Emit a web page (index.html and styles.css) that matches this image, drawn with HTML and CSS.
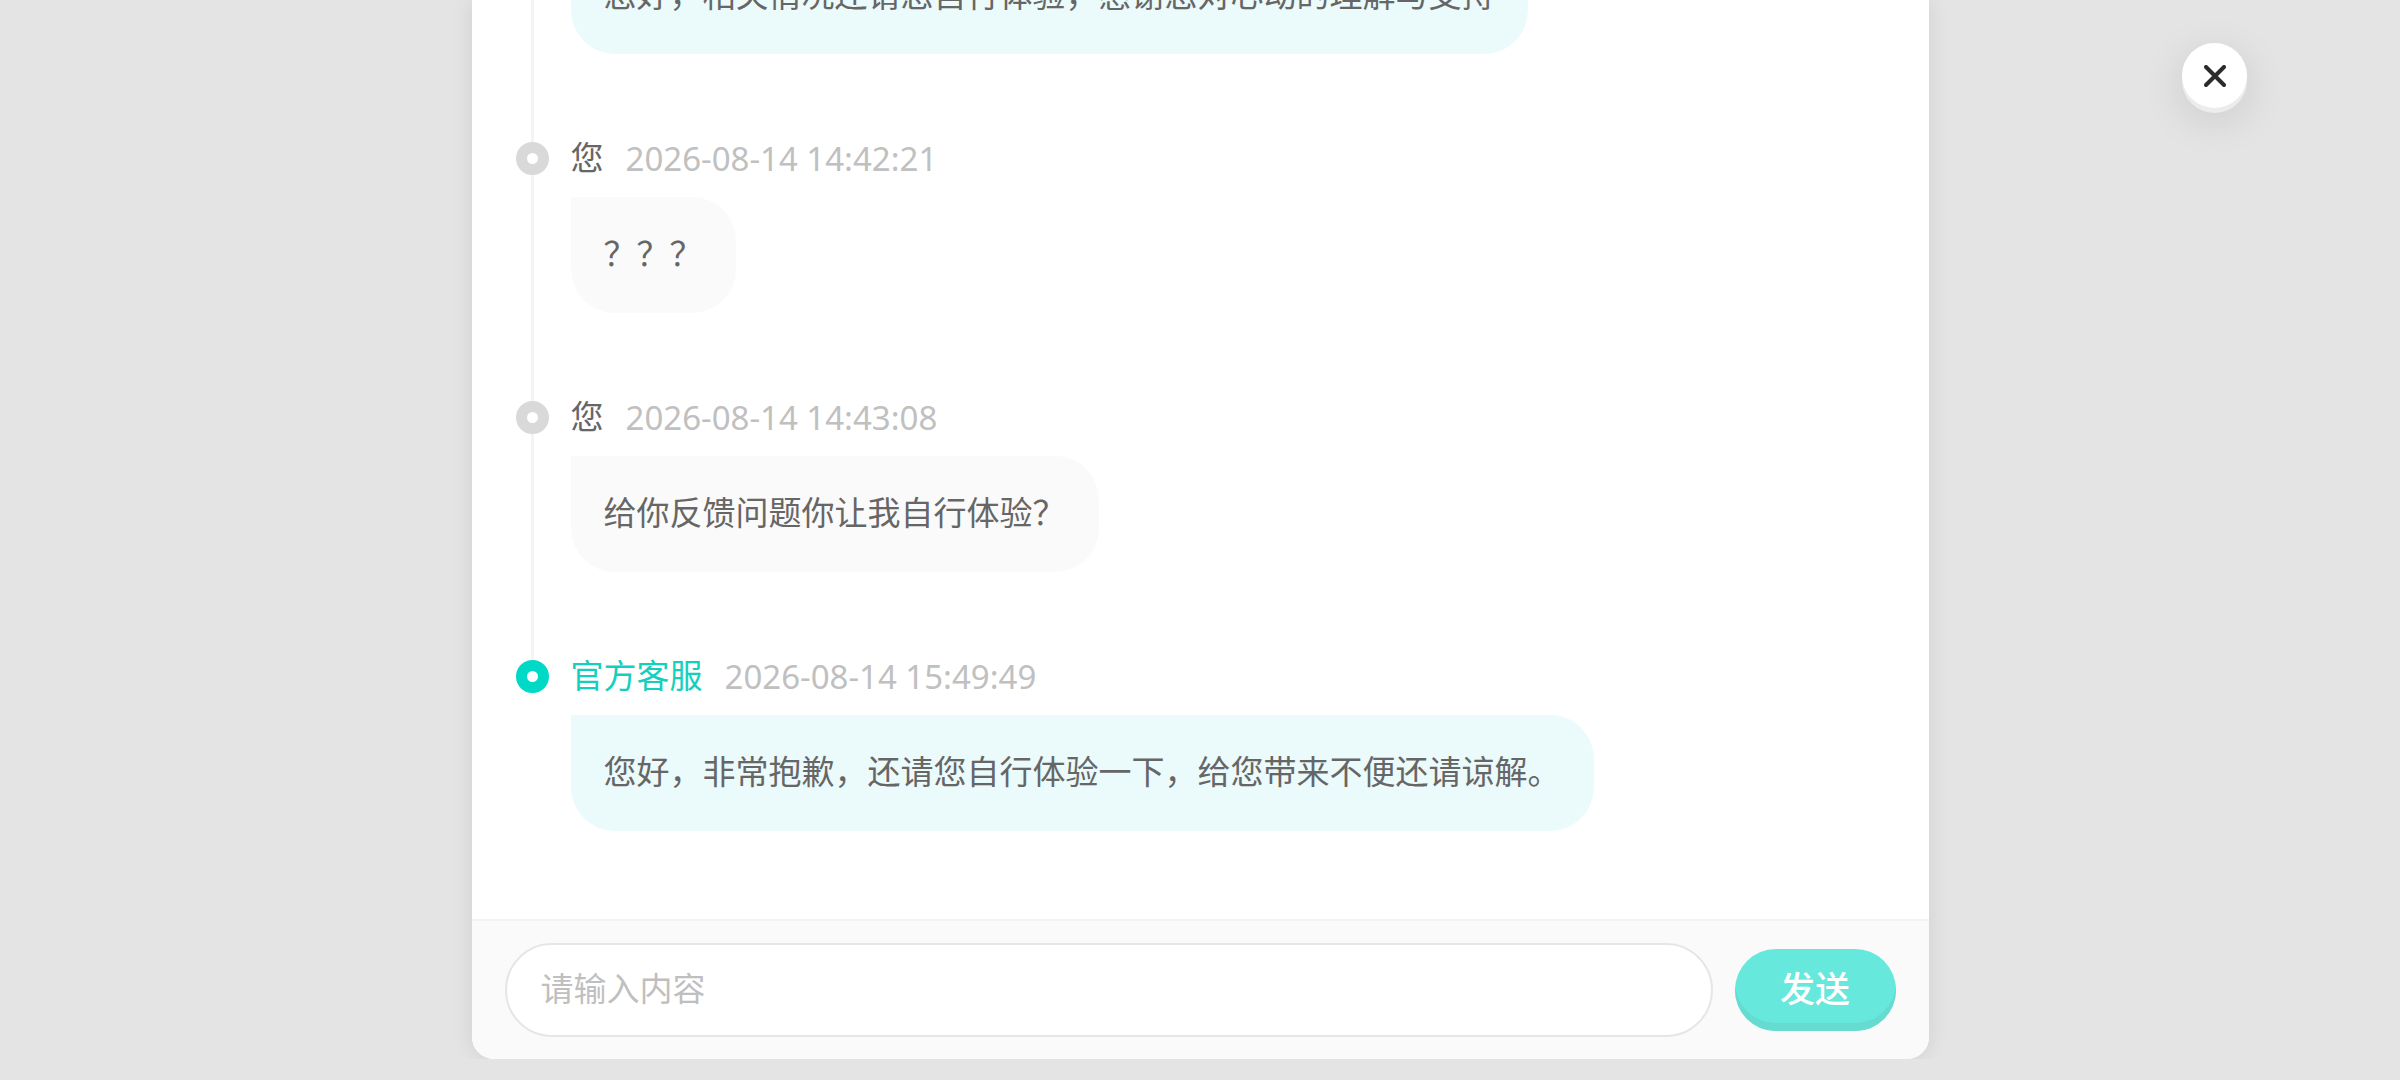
FILE: index.html
```html
<!DOCTYPE html>
<html lang="zh-CN">
<head>
<meta charset="utf-8">
<meta name="viewport" content="width=device-width, initial-scale=1">
<title>官方客服</title>
<link rel="stylesheet" href="styles.css">
</head>
<body>
<div class="viewport">
  <main class="panel">
    <ol class="timeline">
      <li class="entry official">
        <div class="rail"><span class="rail-line"></span></div>
        <div class="content">
          <p class="bubble">您好，相关情况还请您自行体验，感谢您对心动的理解与支持</p>
        </div>
      </li>
      <li class="entry">
        <div class="rail"><span class="dot"></span><span class="rail-line"></span></div>
        <div class="content">
          <div class="meta"><span class="name">您</span><time class="time">2026-08-14 14:42:21</time></div>
          <p class="bubble">？？？</p>
        </div>
      </li>
      <li class="entry">
        <div class="rail"><span class="dot"></span><span class="rail-line"></span></div>
        <div class="content">
          <div class="meta"><span class="name">您</span><time class="time">2026-08-14 14:43:08</time></div>
          <p class="bubble">给你反馈问题你让我自行体验？</p>
        </div>
      </li>
      <li class="entry official">
        <div class="rail"><span class="dot"></span></div>
        <div class="content">
          <div class="meta"><span class="name">官方客服</span><time class="time">2026-08-14 15:49:49</time></div>
          <p class="bubble">您好，非常抱歉，还请您自行体验一下，给您带来不便还请谅解。</p>
        </div>
      </li>
    </ol>
    <form class="composer">
      <input class="field" type="text" placeholder="请输入内容" aria-label="请输入内容">
      <button class="send" type="button">发送</button>
    </form>
  </main>
</div>
<button class="close" type="button" aria-label="关闭">
  <svg class="close-icon" viewBox="0 0 22 22" aria-hidden="true"><path d="M2 2L20 20M20 2L2 20"/></svg>
</button>
</body>
</html>
```
FILE: styles.css
```css
* {
  box-sizing: border-box;
}

body {
  margin: 0;
  height: 100vh;
  overflow: hidden;
  background: #e4e4e4;
  color: #666;
  font-family: "Noto Sans CJK SC", sans-serif;
  font-size: 33px;
  line-height: 50px;
}

.viewport {
  height: calc(100vh - 21px);
  overflow: hidden;
}

.panel {
  display: flex;
  flex-direction: column;
  max-width: 1457px;
  height: 100%;
  margin: 0 auto;
  background: #fff;
  border-radius: 0 0 22px 22px;
  box-shadow: 0 0 22px rgba(0, 0, 0, 0.09);
}

.timeline {
  flex: 1;
  min-height: 0;
  display: flex;
  flex-direction: column;
  justify-content: flex-end;
  overflow: hidden;
  margin: 0;
  padding: 0 44px;
  list-style: none;
}

.entry {
  flex: none;
  display: flex;
  gap: 22px;
}

.rail {
  flex: none;
  display: flex;
  flex-direction: column;
  align-items: center;
  width: 33px;
}

.dot {
  width: 33px;
  height: 33px;
  border: 11px solid #d9d9d9;
  border-radius: 50%;
  background: #fff;
}

.official .dot {
  border-color: #00d9c5;
}

.rail-line {
  flex: 1;
  width: 3px;
  background: #f4f4f4;
}

.content {
  display: flex;
  flex-direction: column;
  align-items: flex-start;
  gap: 22px;
  padding-bottom: 88px;
}

.meta {
  display: flex;
  align-items: center;
  gap: 22px;
  height: 33px;
}

.name {
  padding-bottom: 6px;
}

.official .name {
  color: #15cfbe;
}

.time {
  color: #c0c0c0;
  font-family: "Noto Sans", sans-serif;
}

.bubble {
  margin: 0;
  padding: 30px 33px 36px;
  border-radius: 0 44px 44px 44px;
  background: #fafafa;
}

.official .bubble {
  background: #ebfafa;
}

.composer {
  flex: none;
  display: flex;
  align-items: center;
  gap: 22px;
  padding: 22px 33px;
  border-top: 2px solid #f3f3f3;
  border-radius: 0 0 22px 22px;
  background: #fafafa;
}

.field {
  flex: 1;
  min-width: 0;
  height: 94px;
  padding: 0 34px 6px;
  border: 2px solid #e5e6e8;
  border-radius: 47px;
  background: #fff;
  color: #666;
  font: inherit;
}

.field::placeholder {
  color: #bfbfbf;
  opacity: 1;
}

.send {
  flex: none;
  width: 161px;
  height: 82px;
  padding: 0 0 6px;
  border: 0;
  border-radius: 41px;
  background: #66e8dc;
  box-shadow: inset 0 -8px 0 #66dbd0;
  color: #fff;
  font: inherit;
  font-size: 35px;
  font-weight: 500;
}

.close {
  position: fixed;
  top: 43px;
  right: 153px;
  display: flex;
  align-items: center;
  justify-content: center;
  width: 65px;
  height: 65px;
  padding: 0;
  border: 0;
  border-radius: 50%;
  background: #fff;
  box-shadow: 0 5px 0 #ececec, 0 11px 44px rgba(0, 0, 0, 0.12);
}

.close-icon {
  width: 22px;
  height: 22px;
  fill: none;
  stroke: #2b2b2b;
  stroke-width: 4;
  stroke-linecap: round;
}
```
